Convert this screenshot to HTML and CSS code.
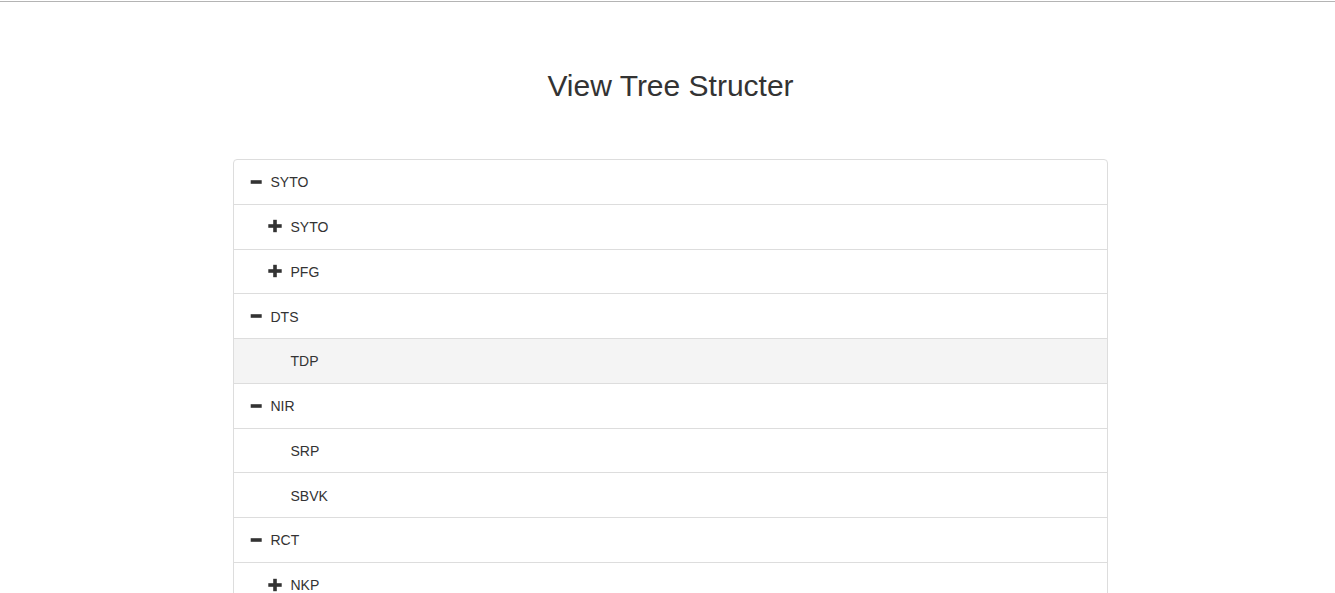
FILE: index.html
```html
<!DOCTYPE html>
<html>
<head>
<meta charset="utf-8">
<title>View Tree Structer</title>
<link rel="stylesheet" href="styles.css">
</head>
<body>
<div class="topbar"></div>
<div class="page">
  <h2 class="title">View Tree Structer</h2>
  <ul class="tree">
    <li class="node">
      <span class="icon"><svg viewBox="0 0 16 14" width="16" height="14"><rect x="2.7" y="5.2" width="11" height="3.6"/></svg></span>
      <span class="label">SYTO</span>
    </li>
    <li class="node">
      <span class="indent"></span>
      <span class="icon"><svg viewBox="0 0 16 14" width="16" height="14"><rect x="0.3" y="5.2" width="13.4" height="3.6"/><rect x="5.2" y="0.8" width="3.6" height="12.4"/></svg></span>
      <span class="label">SYTO</span>
    </li>
    <li class="node">
      <span class="indent"></span>
      <span class="icon"><svg viewBox="0 0 16 14" width="16" height="14"><rect x="0.3" y="5.2" width="13.4" height="3.6"/><rect x="5.2" y="0.8" width="3.6" height="12.4"/></svg></span>
      <span class="label">PFG</span>
    </li>
    <li class="node">
      <span class="icon"><svg viewBox="0 0 16 14" width="16" height="14"><rect x="2.7" y="5.2" width="11" height="3.6"/></svg></span>
      <span class="label">DTS</span>
    </li>
    <li class="node selected">
      <span class="indent"></span>
      <span class="icon"></span>
      <span class="label">TDP</span>
    </li>
    <li class="node">
      <span class="icon"><svg viewBox="0 0 16 14" width="16" height="14"><rect x="2.7" y="5.2" width="11" height="3.6"/></svg></span>
      <span class="label">NIR</span>
    </li>
    <li class="node">
      <span class="indent"></span>
      <span class="icon"></span>
      <span class="label">SRP</span>
    </li>
    <li class="node">
      <span class="indent"></span>
      <span class="icon"></span>
      <span class="label">SBVK</span>
    </li>
    <li class="node">
      <span class="icon"><svg viewBox="0 0 16 14" width="16" height="14"><rect x="2.7" y="5.2" width="11" height="3.6"/></svg></span>
      <span class="label">RCT</span>
    </li>
    <li class="node">
      <span class="indent"></span>
      <span class="icon"><svg viewBox="0 0 16 14" width="16" height="14"><rect x="0.3" y="5.2" width="13.4" height="3.6"/><rect x="5.2" y="0.8" width="3.6" height="12.4"/></svg></span>
      <span class="label">NKP</span>
    </li>
  </ul>
</div>
</body>
</html>
```

FILE: styles.css
```css
html, body {
  margin: 0;
  padding: 0;
  background: #fff;
}

body {
  font-family: "Liberation Sans", Arial, sans-serif;
  color: #333;
}

.topbar {
  margin-top: 1px;
  height: 1px;
  background: #b4b4b4;
}

.page {
  width: 875px;
  margin-left: 233px;
}

.title {
  margin: 66.8px 0 0;
  font-size: 30px;
  font-weight: normal;
  line-height: 33px;
  text-align: center;
  color: #333;
}

.tree {
  list-style: none;
  margin: 57.2px 0 0;
  padding: 0;
}

.node {
  display: flex;
  align-items: center;
  padding: 12.3px 15px 9.7px 14px;
  line-height: 21.78px;
  font-size: 14px;
  border: 1px solid #ddd;
  margin-bottom: -1px;
  background: #fff;
}

.node:first-child {
  border-top-left-radius: 4px;
  border-top-right-radius: 4px;
}

.node.selected {
  background: #f4f4f4;
}

.indent {
  flex: 0 0 20px;
}

.icon {
  flex: 0 0 22.5px;
  height: 14px;
  display: flex;
  align-items: center;
  margin-top: -3px;
}

.icon svg {
  display: block;
  fill: #333;
  overflow: visible;
}

.label {
  color: #333;
}
```
